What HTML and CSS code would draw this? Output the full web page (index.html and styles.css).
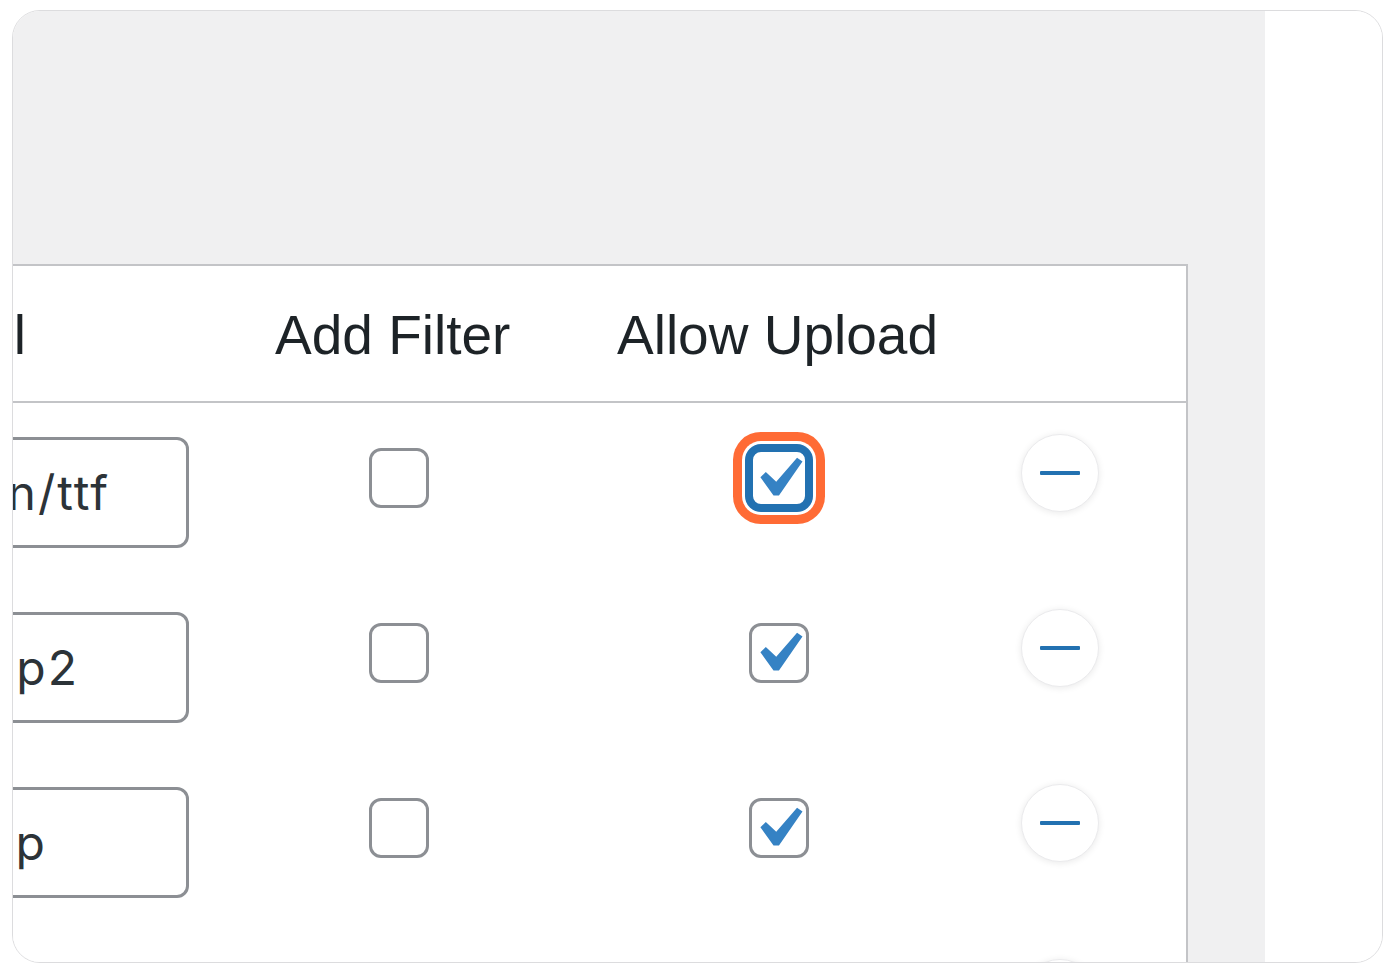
FILE: index.html
```html
<!DOCTYPE html>
<html lang="en">
<head>
<meta charset="utf-8">
<title>File Upload Types</title>
<link rel="stylesheet" href="styles.css">
</head>
<body>
<div class="frame">
  <div class="main">
    <div class="table">
      <div class="row head">
        <div class="th">MIME Type Label</div>
        <div class="th">Add Filter</div>
        <div class="th">Allow Upload</div>
        <div class="th"></div>
      </div>

      <div class="row tr">
        <div class="td"><input class="field v1" type="text" value="application/ttf"></div>
        <div class="td col-b"><span class="cb"></span></div>
        <div class="td col-c"><span class="cb checked focus"><svg class="tick" viewBox="0 0 20 20"><path d="M14.83 4.89l1.34.94-5.81 8.38H9.02L5.78 9.670l1.34-1.25 2.570 2.4z"/></svg></span></div>
        <div class="td col-d"><span class="rm"><span class="bar"></span></span></div>
      </div>

      <div class="row tr">
        <div class="td"><input class="field v2" type="text" value="image/jp2"></div>
        <div class="td col-b"><span class="cb"></span></div>
        <div class="td col-c"><span class="cb checked"><svg class="tick" viewBox="0 0 20 20"><path d="M14.83 4.89l1.34.94-5.81 8.38H9.02L5.78 9.670l1.34-1.25 2.570 2.4z"/></svg></span></div>
        <div class="td col-d"><span class="rm"><span class="bar"></span></span></div>
      </div>

      <div class="row tr">
        <div class="td"><input class="field v3" type="text" value="image/bmp"></div>
        <div class="td col-b"><span class="cb"></span></div>
        <div class="td col-c"><span class="cb checked"><svg class="tick" viewBox="0 0 20 20"><path d="M14.83 4.89l1.34.94-5.81 8.38H9.02L5.78 9.670l1.34-1.25 2.570 2.4z"/></svg></span></div>
        <div class="td col-d"><span class="rm"><span class="bar"></span></span></div>
      </div>

      <div class="row tr">
        <div class="td"><input class="field v3" type="text" value="image/svg+xml"></div>
        <div class="td col-b"><span class="cb"></span></div>
        <div class="td col-c"><span class="cb checked"><svg class="tick" viewBox="0 0 20 20"><path d="M14.83 4.89l1.34.94-5.81 8.38H9.02L5.78 9.670l1.34-1.25 2.570 2.4z"/></svg></span></div>
        <div class="td col-d"><span class="rm"><span class="bar"></span></span></div>
      </div>
    </div>
  </div>
  <div class="aside"></div>
</div>
</body>
</html>
```
FILE: styles.css
```css
* { box-sizing: border-box; }

body {
  margin: 0;
  background: #ffffff;
  font-family: "Liberation Sans", Arial, sans-serif;
}

.frame {
  margin: 10px 0 0 12px;
  width: 1371px;
  height: 953px;
  border: 1px solid #dcdcde;
  border-radius: 28px;
  overflow: hidden;
  display: flex;
}

.main {
  width: 1252px;
  flex: none;
  background: #f0f0f1;
  padding-top: 253px;
}

.aside {
  flex: 1;
  background: #ffffff;
}

.table {
  margin-left: -436px;
  width: 1611px;
  min-height: 900px;
  background: #ffffff;
  border-top: 2px solid #c3c4c7;
  border-right: 2px solid #c3c4c7;
}

.row {
  display: grid;
  grid-template-columns: 676px 342px 385px 206px;
}

.head {
  height: 137px;
  border-bottom: 2px solid #c3c4c7;
  align-items: center;
}

.th {
  padding: 3px 0 0 22px;
  font-size: 55px;
  line-height: 1;
  color: #1d2327;
  white-space: nowrap;
}

.tr {
  height: 175px;
  align-items: start;
}

.td { display: block; }

.field {
  display: block;
  margin: 34px 0 0 18px;
  width: 594px;
  height: 111px;
  border: 3px solid #8c8f94;
  border-radius: 12px;
  background: #ffffff;
  font-family: Inter, "Liberation Sans", sans-serif;
  font-size: 48px;
  letter-spacing: 2px;
  color: #2c3338;
  text-align: right;
  padding: 0 76px 0 20px;
  outline: none;
}
.field.v2 { padding-right: 107px; }
.field.v3 { padding-right: 139px; }

.cb {
  display: block;
  position: relative;
  width: 60px;
  height: 60px;
  margin-top: 45px;
  border: 3px solid #8c8f94;
  border-radius: 12px;
  background: #ffffff;
}
.col-b .cb { margin-left: 116px; }
.col-c .cb { margin-left: 154px; }

.cb.focus {
  border: 4px solid #2271b1;
  box-shadow: 0 0 0 4px #2271b1, 0 0 0 7px #ffffff, 0 0 0 16px #ff6b35;
}

.tick {
  position: absolute;
  left: -15px;
  top: -13px;
  width: 81px;
  height: 81px;
  fill: #3582c4;
}
.cb.focus .tick { left: -16px; top: -14px; }

.rm {
  display: flex;
  align-items: center;
  justify-content: center;
  width: 78px;
  height: 78px;
  margin: 31px 0 0 41px;
  border-radius: 50%;
  background: #ffffff;
  border: 1px solid #ebebed;
  box-shadow: 0 1px 7px rgba(0, 0, 0, 0.09);
}

.bar {
  display: block;
  width: 40px;
  height: 4px;
  border-radius: 1px;
  background: #2271b1;
}
```
